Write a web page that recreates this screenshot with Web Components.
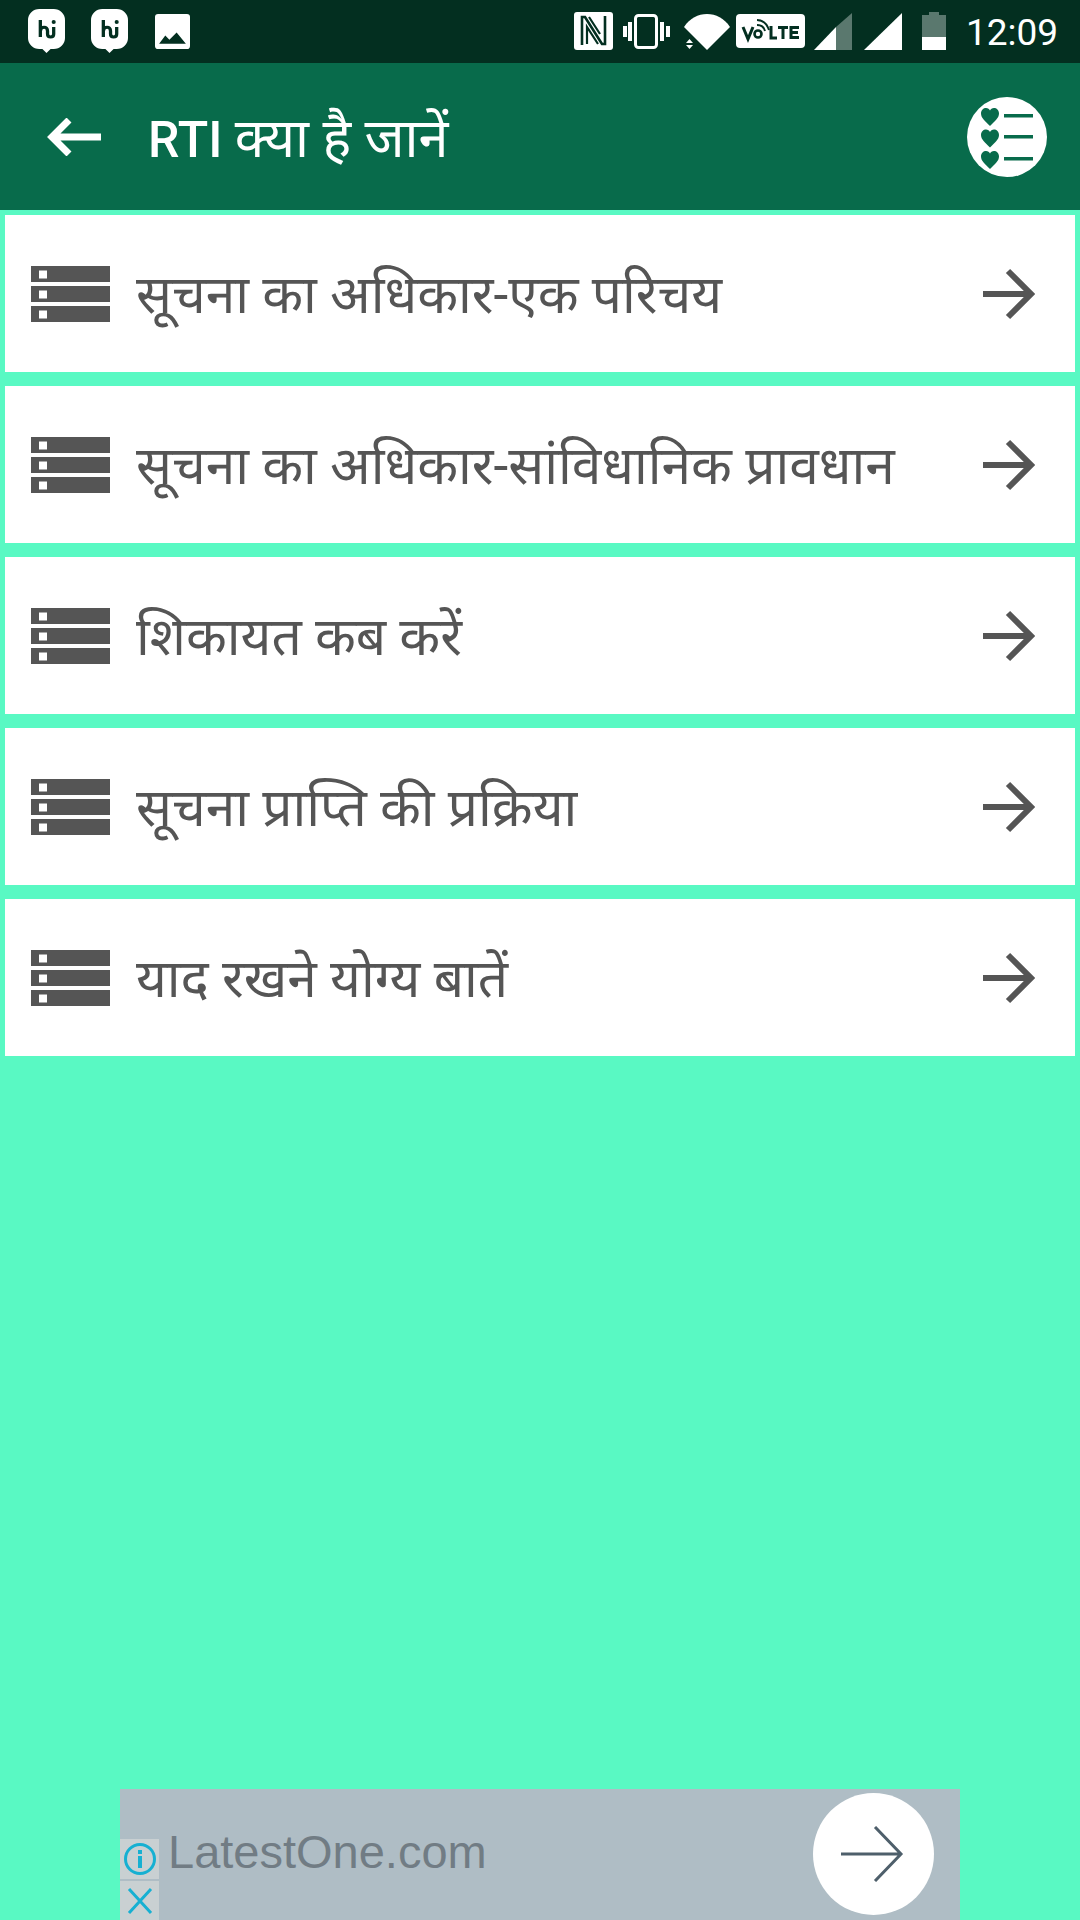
<!DOCTYPE html>
<html lang="hi">
<head>
<meta charset="utf-8">
<title>RTI क्या है जानें</title>
<style>
  html, body { margin: 0; padding: 0; }
  body { width: 1080px; height: 1920px; overflow: hidden; background: #59f9c3; display: flex; flex-direction: column; font-family: Roboto, "Noto Sans", "Noto Sans Devanagari", "Lohit Devanagari", sans-serif; }
  main { flex: 1; display: flex; flex-direction: column; gap: 14px; padding: 5px 5px 0; }
  .hindi { font-size: 54px; font-weight: 400; }
</style>
</head>
<body>
<status-bar></status-bar>
<app-bar>RTI <span class="hindi">क्या है जानें</span></app-bar>
<main>
  <list-row>सूचना का अधिकार-एक परिचय</list-row>
  <list-row>सूचना का अधिकार-सांविधानिक प्रावधान</list-row>
  <list-row>शिकायत कब करें</list-row>
  <list-row>सूचना प्राप्ति की प्रक्रिया</list-row>
  <list-row>याद रखने योग्य बातें</list-row>
</main>
<ad-banner></ad-banner>
<script>
class StatusBar extends HTMLElement {
    constructor() {
        super();
        const shadowRoot = this.attachShadow({ mode: 'open' });
        const hi = `<svg width="37" height="44" viewBox="0 0 36 44" preserveAspectRatio="none">
            <path fill="#fff" d="M11 0h14a11 11 0 0 1 11 11v18a11 11 0 0 1-11 11h-3l-4 4-4-4h-3A11 11 0 0 1 0 29V11A11 11 0 0 1 11 0z"/>
            <path fill="none" stroke="#032f20" stroke-width="3.2" d="M12 11v17M12 22c.5-5 7-5 7 0v3c0 4 6 4 6 0v-7"/>
            <circle cx="25" cy="13" r="2" fill="#032f20"/></svg>`;
        shadowRoot.innerHTML = `
        <style>
            :host { display: flex; align-items: flex-start; height: 63px; background: #032f20; color: #fff; font-family: Roboto, sans-serif; }
            svg { display: block; flex: none; }
            .time { margin: 1px 0 0 20px; font-size: 37px; line-height: 63px; }
        </style>
        <span style="margin:9px 0 0 28px">${hi}</span>
        <span style="margin:9px 0 0 26px">${hi}</span>
        <svg style="margin:14px 0 0 27px" width="35" height="35" viewBox="0 0 34 34">
            <rect width="34" height="34" rx="3" fill="#fff"/>
            <path fill="#032f20" d="M4 29l6-8 4 4 7-7 9 11z"/></svg>
        <svg style="margin:12px 0 0 384px" width="39" height="38" viewBox="0 0 39 38">
            <rect width="39" height="38" rx="3" fill="#fff"/>
            <path fill="none" stroke="#032f20" stroke-width="2.600" d="M8 33V5h3l17 27h3V4"/>
            <path fill="none" stroke="#032f20" stroke-width="2.200" d="M13 32V15l11 17M26 22L15 5"/></svg>
        <svg style="margin:14px 0 0 10px" width="47" height="35" viewBox="0 0 47 35">
            <rect x="12.500" y="1.500" width="21" height="32" rx="3" fill="none" stroke="#fff" stroke-width="3"/>
            <path fill="#fff" d="M0 12h4v11H0zM5 8h4v19H5zM37 8h4v19h-4zM43 12h4v11h-4z"/></svg>
        <svg style="margin:13px 0 0 14px" width="46" height="37" viewBox="0 0 46 37">
            <path fill="#fff" d="M0 14C6 5 14 1 23 1s17 4 23 13L23 37z"/>
            <path fill="#fff" d="M5.500 26L9 30H2zM2 32h7l-3.500 4z"/>
        </svg>
        <svg style="margin:14px 0 0 6px" width="69" height="34" viewBox="0 0 69 34">
            <rect width="69" height="34" rx="4" fill="#fff"/>
            <path fill="none" stroke="#032f20" stroke-width="3" d="M7 13l5 12 5-12"/>
            <circle cx="22" cy="20" r="3.500" fill="none" stroke="#032f20" stroke-width="2.600"/>
            <path fill="none" stroke="#032f20" stroke-width="2" d="M21 11c4 0 7 2 8 6M21 6c6 0 10 4 12 10"/>
            <path fill="none" stroke="#032f20" stroke-width="3" d="M35 12v12h6M42 13.500h10M47 13.500V25M63 13.500h-8v10h8M55 18.500h7"/></svg>
        <svg style="margin:13px 0 0 9px" width="38" height="37" viewBox="0 0 38 37">
            <path fill="#5a786e" d="M38 0v37H22V14z"/>
            <path fill="#fff" d="M22 14v23H0z"/></svg>
        <svg style="margin:13px 0 0 12px" width="38" height="37" viewBox="0 0 38 37">
            <path fill="#fff" d="M38 0v37H0z"/></svg>
        <svg style="margin:12px 0 0 20px" width="24" height="38" viewBox="0 0 24 38">
            <path fill="#5a786e" d="M7 0h10v3h7v22H0V3h7z"/>
            <path fill="#fff" d="M0 25h24v13H0z"/></svg>
        <span class="time">12:09</span>
        `;
    }
}
customElements.define('status-bar', StatusBar);

class AppBar extends HTMLElement {
    constructor() {
        super();
        const shadowRoot = this.attachShadow({ mode: 'open' });
        const heart = 'M23 29C18 24 14 21 14 16.500 14 13 16.500 11 19 11c2 0 3.300 1 4 2.500.7-1.500 2-2.500 4-2.500 2.500 0 5 2 5 5.500C32 21 28 24 23 29z';
        shadowRoot.innerHTML = `
        <style>
            :host { display: flex; align-items: center; height: 147px; background: #086b4b; color: #fff; }
            svg { display: block; flex: none; }
            .title { flex: 1; margin: 5px 0 0 47px; font-size: 50px; font-weight: 500; line-height: 140px; white-space: nowrap; }
            .badge { margin-right: 33px; }
        </style>
        <svg style="margin-left:47px" width="54" height="38" viewBox="0 0 54 38">
            <path fill="none" stroke="#fff" stroke-width="7" d="M54 19H6M22 2L5 19l17 17"/></svg>
        <span class="title"><slot></slot></span>
        <svg class="badge" width="80" height="80" viewBox="0 0 80 80">
            <circle cx="40" cy="40" r="40" fill="#fff"/>
            <g fill="#086b4b">
                <path d="${heart}"/>
                <path d="${heart}" transform="translate(0 21.500)"/>
                <path d="${heart}" transform="translate(0 43)"/>
                <path d="M37 17h29v3.500H37zM37 38h29v3.500H37zM37 60h29v3.500H37z"/>
            </g></svg>
        `;
    }
}
customElements.define('app-bar', AppBar);

class ListRow extends HTMLElement {
    constructor() {
        super();
        const shadowRoot = this.attachShadow({ mode: 'open' });
        shadowRoot.innerHTML = `
        <style>
            :host { display: flex; align-items: center; height: 157px; background: #fff; color: #555; flex: none; }
            svg { display: block; flex: none; }
            .label { flex: 1; margin: 0 0 2px 26px; font-size: 53.200px; white-space: nowrap; }
        </style>
        <svg style="margin-left:26px" width="79" height="56" viewBox="0 0 79 56">
            <path fill="#555" fill-rule="evenodd" d="M0 0h79v16H0zM8 4.500v8h8v-8zM0 20h79v16H0zM8 24.500v8h8v-8zM0 40h79v16H0zM8 44.500v8h8v-8z"/></svg>
        <span class="label"><slot></slot></span>
        <svg style="margin-right:39px" width="53" height="52" viewBox="0 0 53 52">
            <path fill="none" stroke="#555" stroke-width="6" d="M0 26h47M25 3l23 23-23 23"/></svg>
        `;
    }
}
customElements.define('list-row', ListRow);

class AdBanner extends HTMLElement {
    constructor() {
        super();
        const shadowRoot = this.attachShadow({ mode: 'open' });
        shadowRoot.innerHTML = `
        <style>
            :host { display: flex; align-items: flex-start; height: 131px; margin: 0 120px; background: #afbdc5; flex: none; }
            svg { display: block; flex: none; }
            .side { display: flex; flex-direction: column; gap: 2px; width: 39px; margin-top: 50px; flex: none; }
            .side div { display: flex; align-items: center; justify-content: center; background: #c9d0d2; height: 40px; }
            .side div + div { height: 39px; }
            .url { flex: 1; margin: 39px 0 0 9px; font: 47px/1 "Liberation Sans", Arial, sans-serif; color: #717c84; }
            .go { display: flex; align-items: center; justify-content: center; width: 121px; height: 122px; margin: 4px 26px 0 0; border-radius: 50%; background: #fff; flex: none; }
        </style>
        <div class="side">
            <div><svg width="34" height="34" viewBox="0 0 34 34">
                <circle cx="17" cy="17" r="14.500" fill="none" stroke="#16b0d2" stroke-width="3"/>
                <path fill="#16b0d2" d="M15 14h4v12h-4zM15 8h4v4h-4z"/></svg></div>
            <div><svg width="28" height="30" viewBox="0 0 28 30">
                <path fill="none" stroke="#16b0d2" stroke-width="3" d="M3 3l22 24M25 3L3 27"/></svg></div>
        </div>
        <span class="url">LatestOne.com</span>
        <span class="go"><svg width="66" height="56" viewBox="0 0 66 56">
            <path fill="none" stroke="#4e5f6b" stroke-width="3" d="M0 28h59M34 1l26 27-26 27"/></svg></span>
        `;
    }
}
customElements.define('ad-banner', AdBanner);
</script>
</body>
</html>
